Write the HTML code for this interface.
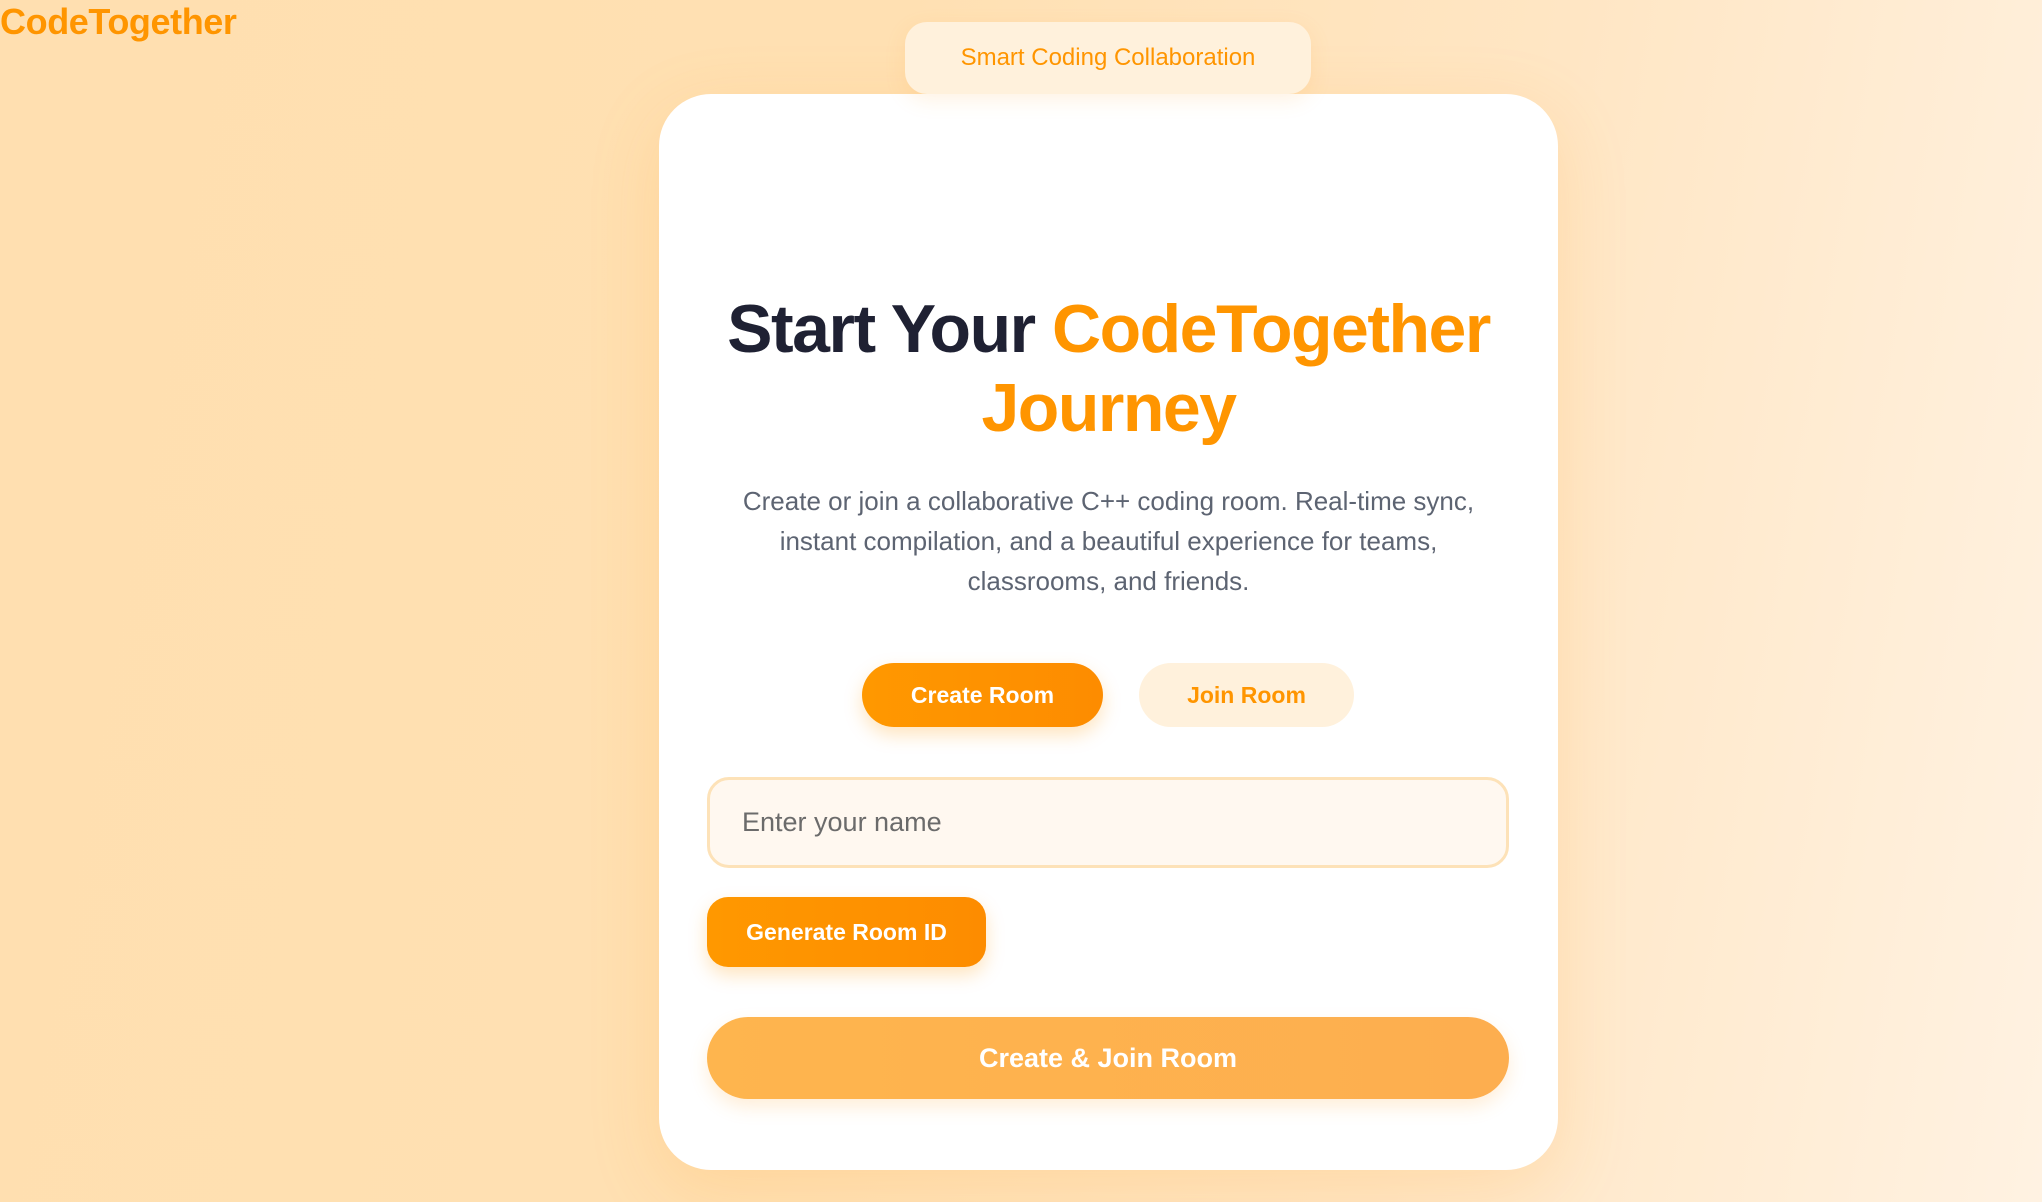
<!DOCTYPE html>
<html><head><meta charset="utf-8"><style>
*{margin:0;padding:0;box-sizing:border-box}
html,body{width:2042px;height:1202px;overflow:hidden}
body{position:relative;font-family:"Liberation Sans",sans-serif;background:linear-gradient(100deg,#ffdfb0 0%,#ffe0b2 40%,#ffe6c4 70%,#fff2e2 100%)}
.logo{position:absolute;left:0;top:0;font-size:36px;font-weight:bold;color:#ff9500;letter-spacing:-0.4px;line-height:44px}
.badge{position:absolute;left:905px;top:22px;width:406px;height:72px;border-radius:22px;background:#fff1dc;color:#ff9500;font-size:24px;display:flex;align-items:center;justify-content:center;box-shadow:0 6px 20px rgba(255,170,60,.15);z-index:2}
.card{position:absolute;left:659px;top:94px;width:899px;height:1076px;background:#fff;border-radius:52px;box-shadow:0 20px 70px rgba(255,160,40,.18)}
h1{position:absolute;left:0;width:899px;top:196px;text-align:center;font-size:68px;line-height:79px;letter-spacing:-1.5px;color:#1f2133;font-weight:bold}
h1 span{color:#ff9500}
p{position:absolute;left:0;width:899px;top:387px;text-align:center;font-size:26px;line-height:40px;color:#5d6472}
.btn{position:absolute;border-radius:32px;font-weight:bold;font-size:23px;display:flex;align-items:center;justify-content:center}
.b1{left:203px;top:569px;width:241px;height:64px;background:linear-gradient(90deg,#ff9800,#fd8c00);color:#fff;box-shadow:0 8px 18px rgba(255,150,0,.25)}
.b2{left:480px;top:569px;width:215px;height:64px;background:#fff1dc;color:#ff9500}
.inp{position:absolute;left:48px;top:683px;width:802px;height:91px;border:3px solid #fde2b8;border-radius:22px;background:#fff8f0;font-size:27px;color:#6b6b6b;padding-left:32px;display:flex;align-items:center}
.gen{left:48px;top:803px;width:279px;height:70px;border-radius:21px;background:linear-gradient(90deg,#ff9800,#fd8c00);color:#fff;box-shadow:0 8px 18px rgba(255,150,0,.25)}
.cj{left:48px;top:923px;width:802px;height:82px;border-radius:41px;background:linear-gradient(90deg,#feb54e,#fdae4f);color:#fff;font-size:27px;box-shadow:0 8px 18px rgba(255,170,60,.2)}
</style></head><body>
<div class="logo">CodeTogether</div>
<div class="badge">Smart Coding Collaboration</div>
<div class="card">
<h1>Start Your <span>CodeTogether</span><br><span>Journey</span></h1>
<p>Create or join a collaborative C++ coding room. Real-time sync,<br>instant compilation, and a beautiful experience for teams,<br>classrooms, and friends.</p>
<div class="btn b1">Create Room</div>
<div class="btn b2">Join Room</div>
<div class="inp">Enter your name</div>
<div class="btn gen">Generate Room ID</div>
<div class="btn cj">Create &amp; Join Room</div>
</div>
</body></html>
